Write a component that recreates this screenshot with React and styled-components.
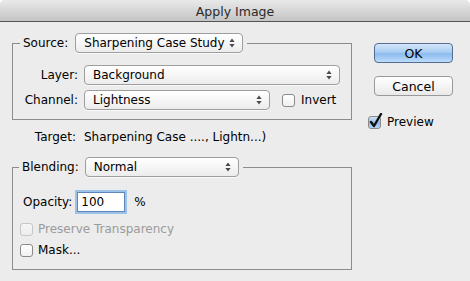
// Apply Image dialog
import styled, { createGlobalStyle } from "styled-components";

const Global = createGlobalStyle`
  html, body {
    margin: 0;
    padding: 0;
    background: #ffffff;
  }
  body {
    font-family: "DejaVu Sans", "Liberation Sans", sans-serif;
    font-size: 12px;
    color: #000;
  }
`;

const Window = styled.div`
  width: 470px;
  height: 281px;
  background: #ececec;
  border-radius: 5px 5px 0 0;
  overflow: hidden;
  display: flex;
  flex-direction: column;
`;

const TitleBar = styled.div`
  height: 22px;
  flex: none;
  box-sizing: border-box;
  background: linear-gradient(#e9e9e9, #d3d3d3 60%, #c4c4c4);
  border-bottom: 1px solid #545454;
  display: flex;
  align-items: center;
  justify-content: center;
  font-size: 12.5px;
  color: #2a2a2a;
  padding-top: 1px;
`;

const Body = styled.div`
  display: flex;
  padding: 11px 0 0 12px;
`;

const LeftCol = styled.div`
  width: 340px;
  display: flex;
  flex-direction: column;
`;

const RightCol = styled.div`
  margin-left: 16px;
  padding-top: 10px;
  display: flex;
  flex-direction: column;
`;

const Group = styled.fieldset`
  margin: 0;
  margin-top: ${(p) => p.$top || 0}px;
  border: 1px solid #8c8c8c;
  padding: ${(p) => p.$pad};
  min-inline-size: 0;
  display: flex;
  flex-direction: column;
`;

const Legend = styled.legend`
  padding: 0 4px 0 3px;
  margin-left: -1px;
`;

const LegendInner = styled.div`
  display: flex;
  align-items: center;
  gap: ${(p) => p.$gap}px;
  height: 20px;
`;

const Row = styled.div`
  display: grid;
  grid-template-columns: ${(p) => p.$label}px auto auto 1fr;
  column-gap: ${(p) => p.$gap}px;
  align-items: center;
  height: ${(p) => p.$h || 20}px;
  margin-top: ${(p) => p.$top || 0}px;
`;

const Label = styled.span`
  text-align: right;
  white-space: nowrap;
`;

const PopupBox = styled.div`
  width: ${(p) => p.$w}px;
  height: 20px;
  box-sizing: border-box;
  border: 1px solid #9e9e9e;
  border-radius: 4px;
  background: linear-gradient(#ffffff, #f6f6f6 50%, #ececec);
  box-shadow: 0 1px 0 rgba(255, 255, 255, 0.7);
  display: flex;
  align-items: center;
  justify-content: space-between;
  padding: 0 7px 0 8px;
  white-space: nowrap;
`;

const Arrows = () => (
  <svg width="6" height="10" viewBox="0 0 6 10">
    <path d="M3 0.5 L5.6 4 L0.4 4 Z" fill="#4a4a4a" />
    <path d="M3 9.5 L5.6 6 L0.4 6 Z" fill="#4a4a4a" />
  </svg>
);

function Popup({ w, children }) {
  return (
    <PopupBox $w={w}>
      <span>{children}</span>
      <Arrows />
    </PopupBox>
  );
}

const CheckRow = styled.label`
  display: flex;
  align-items: center;
  gap: ${(p) => p.$gap || 5}px;
  height: 16px;
  margin-top: ${(p) => p.$top || 0}px;
  margin-left: ${(p) => p.$left || 0}px;
  color: ${(p) => (p.$disabled ? "#9b9b9b" : "#000")};
`;

const Box = styled.span`
  width: 13px;
  height: 13px;
  box-sizing: border-box;
  border: 1px solid ${(p) => (p.$disabled ? "#c6c6c6" : "#8a8a8a")};
  border-radius: 3px;
  background: ${(p) =>
    p.$checked
      ? "linear-gradient(#cfe2f7, #8fbbea 55%, #b4d5f5)"
      : p.$disabled
      ? "linear-gradient(#f6f6f6, #ececec)"
      : "linear-gradient(#ffffff, #f0f0f0)"};
  position: relative;
  flex: none;
`;

const Tick = styled.svg`
  position: absolute;
  left: 0px;
  top: -4px;
`;

function Checkbox({ checked, disabled, children, ...rest }) {
  return (
    <CheckRow $disabled={disabled} {...rest}>
      <Box $checked={checked} $disabled={disabled}>
        {checked && (
          <Tick width="14" height="15" viewBox="0 0 14 15">
            <path
              d="M2 9 L5 13 L12 1"
              fill="none"
              stroke="#111"
              strokeWidth="2.4"
              strokeLinecap="round"
              strokeLinejoin="round"
            />
          </Tick>
        )}
      </Box>
      <span>{children}</span>
    </CheckRow>
  );
}

const TargetRow = styled.div`
  display: grid;
  grid-template-columns: 64px 1fr;
  column-gap: 8px;
  align-items: center;
  height: 16px;
  margin-top: 9px;
`;

const OpacityRow = styled.div`
  display: flex;
  align-items: center;
  height: 20px;
  padding-left: 3px;
`;

const NumberField = styled.div`
  width: 48px;
  height: 20px;
  box-sizing: border-box;
  margin-left: 5px;
  border: 1px solid #5f86b8;
  box-shadow: 0 0 0 2px #9cc2ea;
  background: #fff;
  display: flex;
  align-items: center;
  padding-left: 3px;
`;

const Unit = styled.span`
  margin-left: 9px;
`;

const Button = styled.div`
  width: 79px;
  height: 20px;
  box-sizing: border-box;
  margin-left: 6px;
  margin-top: ${(p) => p.$top || 0}px;
  border-radius: 4px;
  border: 1px solid ${(p) => (p.$primary ? "#566d93" : "#9a9a9a")};
  background: ${(p) =>
    p.$primary
      ? "linear-gradient(#d5e6f9, #a9cdf3 45%, #8cbbee 55%, #bcdcfa)"
      : "linear-gradient(#ffffff, #f5f5f5 50%, #e9e9e9)"};
  display: flex;
  align-items: center;
  justify-content: center;
  font-size: 12.5px;
`;

export default function App() {
  return (
    <>
      <Global />
      <Window>
        <TitleBar>Apply Image</TitleBar>
        <Body>
          <LeftCol>
            <Group $pad="12px 8px 9px 8px">
              <Legend>
                <LegendInner $gap={7}>
                  <span>Source:</span>
                  <Popup w={168}>Sharpening Case Study</Popup>
                </LegendInner>
              </Legend>
              <Row $label={57} $gap={6}>
                <Label>Layer:</Label>
                <Popup w={256}>Background</Popup>
              </Row>
              <Row $label={57} $gap={6} $top={5}>
                <Label>Channel:</Label>
                <Popup w={186}>Lightness</Popup>
                <Checkbox $gap={6} $left={6}>
                  Invert
                </Checkbox>
              </Row>
            </Group>

            <TargetRow>
              <Label>Target:</Label>
              <span>Sharpening Case ...., Lightn...)</span>
            </TargetRow>

            <Group $top={12} $pad="15px 8px 11px 7px">
              <Legend>
                <LegendInner $gap={6}>
                  <span>Blending:</span>
                  <Popup w={154}>Normal</Popup>
                </LegendInner>
              </Legend>
              <OpacityRow>
                <span>Opacity:</span>
                <NumberField>100</NumberField>
                <Unit>%</Unit>
              </OpacityRow>
              <Checkbox disabled $top={9}>
                Preserve Transparency
              </Checkbox>
              <Checkbox $top={5}>Mask...</Checkbox>
            </Group>
          </LeftCol>

          <RightCol>
            <Button $primary>OK</Button>
            <Button $top={13}>Cancel</Button>
            <Checkbox checked $gap={6} $top={18}>
              Preview
            </Checkbox>
          </RightCol>
        </Body>
      </Window>
    </>
  );
}
